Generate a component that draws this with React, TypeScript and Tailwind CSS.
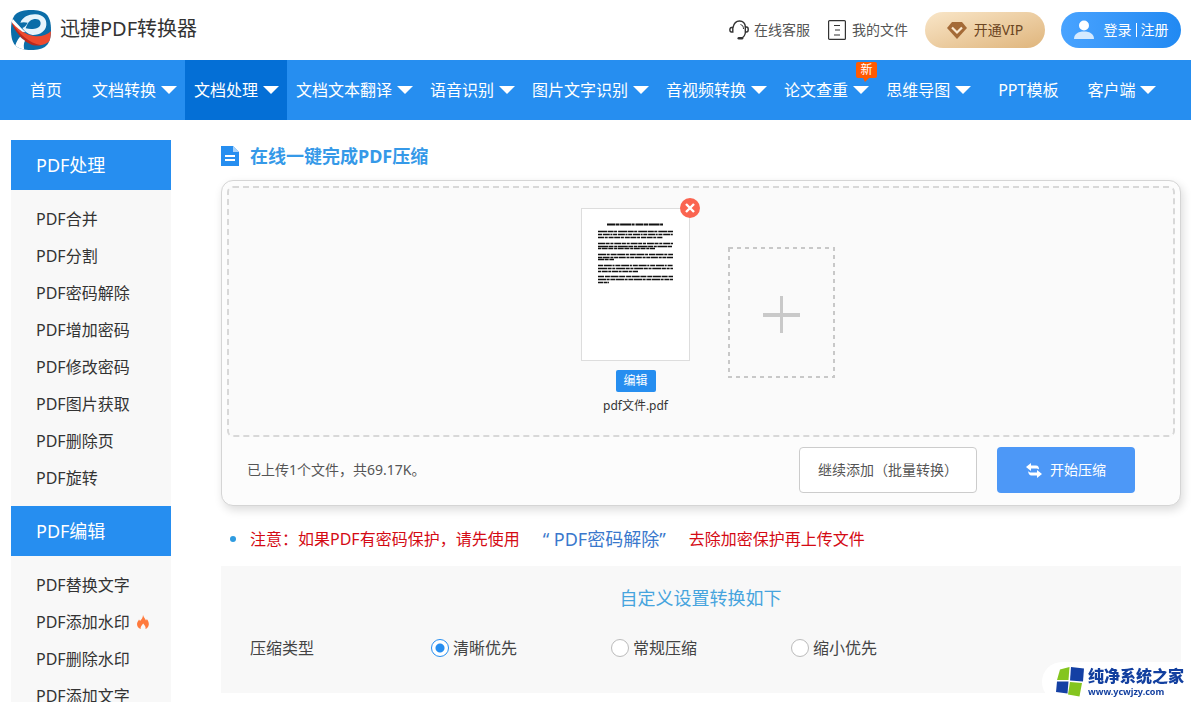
import React, { useState } from 'react';

const navItems = [
  { label: '文档转换', arrow: true },
  { label: '文档处理', arrow: true, active: true },
  { label: '文档文本翻译', arrow: true },
  { label: '语音识别', arrow: true },
  { label: '图片文字识别', arrow: true },
  { label: '音视频转换', arrow: true },
  { label: '论文查重', arrow: true, isNew: true },
  { label: '思维导图', arrow: true },
  { label: 'PPT模板', arrow: false },
  { label: '客户端', arrow: true },
];

const sideGroups = [
  {
    title: 'PDF处理',
    items: ['PDF合并', 'PDF分割', 'PDF密码解除', 'PDF增加密码', 'PDF修改密码', 'PDF图片获取', 'PDF删除页', 'PDF旋转'],
  },
  {
    title: 'PDF编辑',
    items: ['PDF替换文字', 'PDF添加水印', 'PDF删除水印', 'PDF添加文字'],
  },
];

const options = ['清晰优先', '常规压缩', '缩小优先'];

// [y, line end, dash pattern] for every text line of the page preview
const previewLines: [number, number, string][] = [
  [22, 91, '9 .6 6 .5 3 1'],
  [25, 91, '4 .8 7 .6 2 .7'],
  [28, 81, '6 .7 3 .9 5 .6'],
  [34, 91, '7 .6 4 .8 3 .9'],
  [37, 90, '10 .5 5 .7 3 .6'],
  [39, 73, '3 .6 6 .7 5 .8'],
  [45, 91, '8 .7 3 .9 6 .6'],
  [48, 91, '4 .6 7 .8 3 .7'],
  [50, 32, '6 .6 4 .8'],
  [56, 91, '5 .8 8 .7 2 .9'],
  [59, 91, '9 .6 4 .7 3 .8'],
  [62, 56, '3 .7 6 .6'],
  [67, 91, '6 .9 5 .6 8 .7'],
  [70, 91, '8 .6 3 .8 5 .6'],
  [73, 27, '5 .6 4 .5'],
];

function Logo() {
  return (
    <svg className="h-10 w-10" viewBox="0 0 120 120" aria-hidden="true">
      <defs>
        <clipPath id="logo-shape">
          <path d="M60 0C101 0 120 13 120 60S101 120 60 120 0 107 0 60 19 0 60 0Z" />
        </clipPath>
      </defs>
      <g clipPath="url(#logo-shape)">
        <rect width="120" height="120" fill="#0b6da8" />
        <path d="M28 38C36 20 54 12 74 13C96 14 108 27 106 45C104 64 86 76 64 75C50 72 40 64 34 54C42 52 46 45 50 38C42 36 34 36 28 38Z" fill="#e6f4fc" />
        <path d="M44 55C50 34 62 27 74 27C86 27 91 36 88 45C84 56 64 60 44 55Z" fill="#0b6da8" />
        <path d="M0 32C18 54 42 74 69 78C88 81 106 76 120 64V90C100 110 72 110 50 95C27 78 8 56 0 32Z" fill="#ee4a2e" />
        <path d="M3 40C22 68 52 99 90 106C66 110 48 99 34 86C19 70 8 56 3 40Z" fill="#b92a1e" />
        <path d="M27 80C31 84 36 88 42 92C37 101 38 111 40 120H9C12 104 18 90 27 80Z" fill="#fff" />
        <path d="M0 20C14 36 27 51 44 67L34 65C19 55 6 42 0 34Z" fill="#fff" />
      </g>
    </svg>
  );
}

function Header() {
  return (
    <header className="flex h-15 items-center justify-between pl-[11px] pr-[10px]">
      <a href="#" className="flex items-center gap-[9px]">
        <Logo />
        <span className="pb-[2px] text-xl leading-6 text-[#333]">迅捷PDF转换器</span>
      </a>
      <div className="flex items-center text-sm leading-5 text-[#555]">
        <a href="#" className="mr-[18px] flex items-center gap-[5px]">
          <svg className="h-5 w-5" viewBox="0 0 20 20" fill="none" stroke="#333" strokeWidth="1.4" aria-hidden="true">
            <path d="M4 7.5C5 3 7.500 1 10.500 1S16 3 16.500 7" />
            <path d="M3.800 7.500H2.500C.3 7.500.3 12 2.500 12H3.800Z" />
            <path d="M16.300 7H17.500C19.800 7 19.800 12 17.500 12H16.300ZM16.500 12C16 15.500 15 17 13 17.800" />
            <path d="M11.500 4.500C13.500 5 14.500 6.500 14.500 9" strokeWidth="1" />
            <path d="M9.800 18.200H13" strokeWidth="2.600" strokeLinecap="round" />
          </svg>
          在线客服
        </a>
        <a href="#" className="mr-[17px] flex items-center gap-[6px]">
          <svg className="h-5 w-[18px]" viewBox="0 0 18 20" fill="none" stroke="#333" strokeWidth="1.2" aria-hidden="true">
            <rect x=".6" y=".6" width="16.800" height="18.800" rx="1" />
            <path d="M6 5.500h6M7 10h5M6 15h6" />
          </svg>
          我的文件
        </a>
        <button className="mr-4 flex h-9 w-30 items-center justify-center gap-[7px] rounded-full bg-linear-to-br from-[#f9e6c8] to-[#dfb57c] text-[#6b4522]">
          <svg className="h-[18px] w-5" viewBox="0 0 20 18" aria-hidden="true">
            <path d="M5 1H15L20 7 10 18 0 7Z" fill="#a46a37" />
            <path d="M5 6.500L10 11.500 15 6.500" fill="none" stroke="#fbe9cf" strokeWidth="2.200" />
          </svg>
          开通VIP
        </button>
        <button className="flex h-9 w-30 items-center justify-center rounded-full bg-linear-to-r from-[#48a3ff] to-[#2089f2] text-white">
          <svg className="mr-[10px] h-5 w-5" viewBox="0 0 20 20" aria-hidden="true">
            <circle cx="10" cy="5.500" r="5" fill="#fff" />
            <path d="M0 19C0 14 4 11.500 10 11.500S20 14 20 19Z" fill="#d5eaff" />
          </svg>
          登录
          <span className="mx-1 h-[14px] w-px bg-white" />
          注册
        </button>
      </div>
    </header>
  );
}

function NavBar() {
  return (
    <nav className="flex h-15 bg-[#268ef0] pl-[11px] text-base text-white">
      <a href="#" className="flex items-center pl-[19px] pr-[21px]">首页</a>
      {navItems.map((item) => (
        <a
          key={item.label}
          href="#"
          className={`relative flex items-center gap-[5px] whitespace-nowrap ${item.arrow ? 'pl-[9px] pr-2' : 'pl-[19px] pr-5'} ${item.active ? 'bg-[#046fd6]' : ''}`}
        >
          {item.label}
          {item.arrow && (
            <svg className="h-2 w-4" viewBox="0 0 16 8" fill="#fff" aria-hidden="true">
              <path d="M0 0H16L8 8Z" />
            </svg>
          )}
          {item.isNew && (
            <span className="absolute right-0 top-[2px] flex h-4 w-[21px] items-center justify-center rounded-xs bg-[#ff5a00] text-xs leading-4">
              新
              <svg className="absolute left-[7px] top-4 h-1 w-[6px]" viewBox="0 0 6 4" fill="#ff5a00" aria-hidden="true">
                <path d="M0 0H6L2 4Z" />
              </svg>
            </span>
          )}
        </a>
      ))}
    </nav>
  );
}

function Sidebar() {
  return (
    <aside className="w-40 shrink-0 bg-[#f8f8f8] text-[#333]">
      {sideGroups.map((group) => (
        <section key={group.title}>
          <h2 className="bg-[#268ef0] pl-[25px] text-lg leading-[50px] text-white">{group.title}</h2>
          <ul className="py-[10px]">
            {group.items.map((item) => (
              <li key={item}>
                <a href="#" className="flex h-[37px] items-center pl-[25px] text-base">
                  {item}
                  {item === 'PDF添加水印' && (
                    <svg className="ml-[7px] h-[14px] w-3" viewBox="0 0 12 14" aria-hidden="true">
                      <path d="M6 0C7 3 8.500 4 9 5.500C9.500 5 9.800 4.500 9.800 4C11.500 6 12 8 11.800 9.800C11.500 12 10 13.500 8.500 14C9 11.500 7.500 10 6.200 8.500C5 10 3.200 11.500 3.700 14C1.500 13.300 0 11.500 0 9C0 7 1.500 5.800 2 4.500C2.500 5 2.800 5.500 3 6C4.500 4.500 6 2.500 6 0Z" fill="#ff7a3d" />
                    </svg>
                  )}
                </a>
              </li>
            ))}
          </ul>
        </section>
      ))}
    </aside>
  );
}

function FilePreview() {
  return (
    <div className="flex flex-col items-center">
      <div className="relative border border-[#ddd] bg-white">
        <svg className="h-[151px] w-[107px]" viewBox="0 0 107 151" stroke="#111" aria-hidden="true">
          <path d="M25 15.500H81" strokeWidth="2" strokeDasharray="8 .5 4 .6 11 .5 3 .9" />
          {previewLines.map(([y, end, dash]) => (
            <path key={y} d={`M16 ${y + 0.5}H${end}`} strokeWidth="1.500" strokeDasharray={dash} />
          ))}
        </svg>
        <button aria-label="删除" className="absolute -right-[11px] -top-[11px] flex h-5 w-5 items-center justify-center rounded-full bg-[#fa6450]">
          <svg className="h-[10px] w-[10px]" viewBox="0 0 10 10" stroke="#fff" strokeWidth="2.400" aria-hidden="true">
            <path d="M1 1L9 9M9 1L1 9" />
          </svg>
        </button>
      </div>
      <button className="mt-[9px] h-[22px] w-10 rounded-xs bg-[#268ef0] text-xs leading-[22px] text-white">编辑</button>
      <span className="mt-1 text-xs leading-5 text-[#333]">pdf文件.pdf</span>
    </div>
  );
}

function UploadCard() {
  return (
    <section className="rounded-xl border border-[#d5d5d5] bg-[#fcfcfc] px-[5px] pb-3 pt-[5px] shadow-[2px_4px_10px_rgba(0,0,0,0.14)]">
      <div className="flex h-[251px] items-start justify-center gap-[38px] rounded-md border-2 border-dashed border-[#d8d8d8] bg-[#fafafa] pl-[14px] pt-5">
        <FilePreview />
        <button aria-label="添加文件" className="mt-[39px]">
          <svg className="h-[131px] w-[107px]" viewBox="0 0 107 131" aria-hidden="true">
            <rect x="1" y="1" width="105" height="129" fill="none" stroke="#c8c8c8" strokeWidth="2" strokeDasharray="4 4" />
            <path d="M52 49h3v37h-3zM35 66h37v4H35z" fill="#c9c9c9" />
          </svg>
        </button>
      </div>
      <div className="mt-[10px] flex items-center pl-5 pr-10 text-sm text-[#555]">
        <p>已上传1个文件，共69.17K。</p>
        <button className="ml-auto h-[46px] w-[178px] rounded-sm border border-[#ccc] bg-white">继续添加（批量转换）</button>
        <button className="ml-5 flex h-[46px] w-[138px] items-center justify-center gap-2 rounded-sm bg-[#4d98f7] text-white">
          <svg className="h-[15px] w-4" viewBox="0 0 16 15" fill="#fff" aria-hidden="true">
            <path d="M0 4L5 0V2.600H10C12 2.600 13 4 13 6.500C12 5.600 11 5.400 10 5.400H5V8Z" />
            <path d="M16 11L11 7V9.600H5.500C4 9.600 3 9.200 2.200 8C2.200 11 3.500 12.400 5.500 12.400H11V15Z" />
          </svg>
          开始压缩
        </button>
      </div>
    </section>
  );
}

function Settings() {
  const [type, setType] = useState(options[0]);

  return (
    <section className="bg-[#f8f8f8] pb-[33px] pl-[29px] pt-5 text-[#444]">
      <h2 className="pr-[30px] text-center text-lg leading-6 text-[#46a4de]">自定义设置转换如下</h2>
      <fieldset className="mt-[26px] flex items-center text-base leading-6">
        <legend className="float-left w-[181px]">压缩类型</legend>
        {options.map((option) => (
          <label key={option} className="flex w-45 items-center gap-1">
            <input
              type="radio"
              name="compress"
              checked={type === option}
              onChange={() => setType(option)}
              className="h-[18px] w-[18px] appearance-none rounded-full border border-[#bbb] bg-white checked:border-[#268ef0] checked:bg-[radial-gradient(circle,#268ef0_4px,#fff_5px)]"
            />
            {option}
          </label>
        ))}
      </fieldset>
    </section>
  );
}

function SiteMark() {
  return (
    <a href="#" className="fixed bottom-0 right-0 flex h-10 items-center gap-1 rounded-l-full bg-white pl-[14px] pr-[7px] text-[#123f9f]">
      <svg className="h-[30px] w-7" viewBox="0 0 28 30" aria-hidden="true">
        <path d="M4 2.500L13.500 0 12.500 13H1Z" fill="#84c51f" />
        <path d="M15 0L28 1.500 27 14.500 14 13.500Z" fill="#1440a4" />
        <path d="M1 14.500L12.500 14.500 11.500 26.500 0 25Z" fill="#1440a4" />
        <path d="M14 15L26 16 23.500 29.500 12 27.500Z" fill="#84c51f" />
      </svg>
      <span className="flex flex-col">
        <span className="text-base font-black leading-5">纯净系统之家</span>
        <span className="text-[9px] font-bold leading-3">www.ycwjzy.com</span>
      </span>
    </a>
  );
}

export default function App() {
  return (
    <div className="max-h-screen overflow-hidden bg-white font-['Noto_Sans','Noto_Sans_CJK_SC',sans-serif]" lang="zh-CN">
      <Header />
      <NavBar />
      <div className="flex gap-[50px] pl-[11px] pr-[10px] pt-5">
        <Sidebar />
        <main className="min-w-0 flex-1">
          <h1 className="mb-2 flex h-8 items-center gap-[11px] text-lg font-bold text-[#3599e8]">
            <svg className="h-5 w-[18px]" viewBox="0 0 18 20" aria-hidden="true">
              <path d="M0 0H12L18 6V20H0Z" fill="#268ef0" />
              <path d="M12 0L18 6H12Z" fill="#a9d2f8" />
              <path d="M4 9h10v2H4zM4 13h10v2H4z" fill="#fff" />
            </svg>
            在线一键完成PDF压缩
          </h1>
          <UploadCard />
          <p className="flex h-15 items-center pl-[9px] pt-[6px] text-base text-[#d40a14]">
            <span className="mr-[14px] h-[6px] w-[6px] rounded-full bg-[#2f9be0]" />
            注意：如果PDF有密码保护，请先使用
            <a href="#" className="mx-[23px] text-lg text-[#3a78cc]">“ PDF密码解除”</a>
            去除加密保护再上传文件
          </p>
          <Settings />
        </main>
      </div>
      <SiteMark />
    </div>
  );
}
